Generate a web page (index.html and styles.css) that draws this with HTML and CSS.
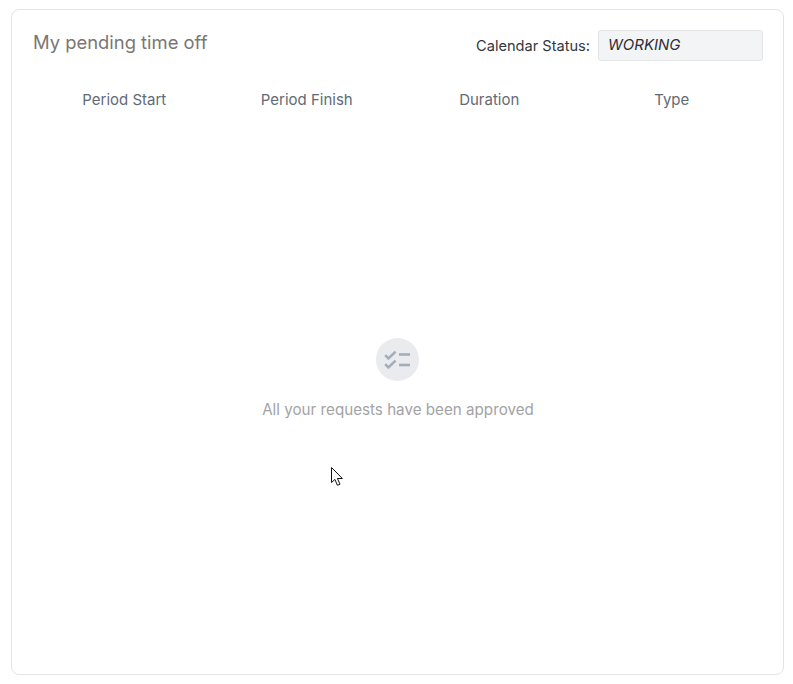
FILE: index.html
```html
<!DOCTYPE html>
<html lang="en">
<head>
<meta charset="utf-8">
<title>My pending time off</title>
<link rel="stylesheet" href="styles.css">
</head>
<body>
<main class="card">
  <header class="card-head">
    <h1 class="title">My pending time off</h1>
    <div class="status">
      <span class="status-label">Calendar Status:</span>
      <span class="status-value">WORKING</span>
    </div>
  </header>
  <div class="columns">
    <div class="col">Period Start</div>
    <div class="col">Period Finish</div>
    <div class="col">Duration</div>
    <div class="col">Type</div>
  </div>
  <section class="empty">
    <div class="empty-icon">
      <svg width="27" height="19" viewBox="0 0 27 19" fill="none" stroke="#a4aebb" stroke-width="2.6">
        <path d="M1.2 5.2l3.2 3.2L11.6 1.6"/>
        <path d="M1.2 14.2l3.2 3.2L11.6 10.6"/>
        <path d="M15 4.5h11"/>
        <path d="M15 15h11"/>
      </svg>
    </div>
    <p class="empty-text">All your requests have been approved</p>
  </section>
  <svg class="cursor" width="14" height="21" viewBox="0 0 14 21">
    <path d="M1.5 1.5V16.5L4.9 13.4L7.4 19.3L10 18.2L7.4 12.5H12.4Z" fill="#fff" stroke="#111" stroke-width="1"/>
  </svg>
</main>
</body>
</html>
```
FILE: styles.css
```css
* { box-sizing: border-box; }
html, body { margin: 0; height: 100%; background: #fff; }
body {
  padding: 9px 9px 9px 11px;
  font-family: "Inter", "Liberation Sans", sans-serif;
}
.card {
  position: relative;
  height: 666px;
  border: 1px solid #e2e4e7;
  border-radius: 8px;
  padding: 20px 20px 0 21px;
  display: flex;
  flex-direction: column;
}
.card-head {
  display: flex;
  justify-content: space-between;
  align-items: flex-start;
  height: 31px;
}
.title {
  margin: 0;
  font-size: 18.4px;
  font-weight: 400;
  line-height: 25px;
  color: #7a7674;
}
.status { display: flex; align-items: flex-start; gap: 8px; }
.status-label { font-size: 14.6px; line-height: 33px; color: #33373d; }
.status-value {
  width: 165px;
  height: 31px;
  padding: 0 9px 2px;
  display: flex;
  align-items: center;
  background: #f3f4f6;
  border: 1px solid #e2e4e7;
  border-radius: 3px;
  font-size: 15px;
  font-style: italic;
  color: #2b2e33;
}
.columns {
  display: grid;
  grid-template-columns: repeat(4, 1fr);
  margin-top: 28px;
}
.col {
  text-align: center;
  font-size: 15px;
  line-height: 22px;
  color: #626a75;
}
.empty {
  display: flex;
  flex-direction: column;
  align-items: center;
  margin-top: 227px;
}
.empty-icon {
  width: 43px;
  height: 43px;
  margin-right: 1px;
  border-radius: 50%;
  background: #e9ebee;
  display: flex;
  align-items: center;
  justify-content: center;
}
.empty-text {
  margin: 19px 0 0;
  font-size: 15.2px;
  line-height: 20px;
  color: #a3a3a5;
}
.cursor { position: absolute; left: 318px; top: 456px; }
```
